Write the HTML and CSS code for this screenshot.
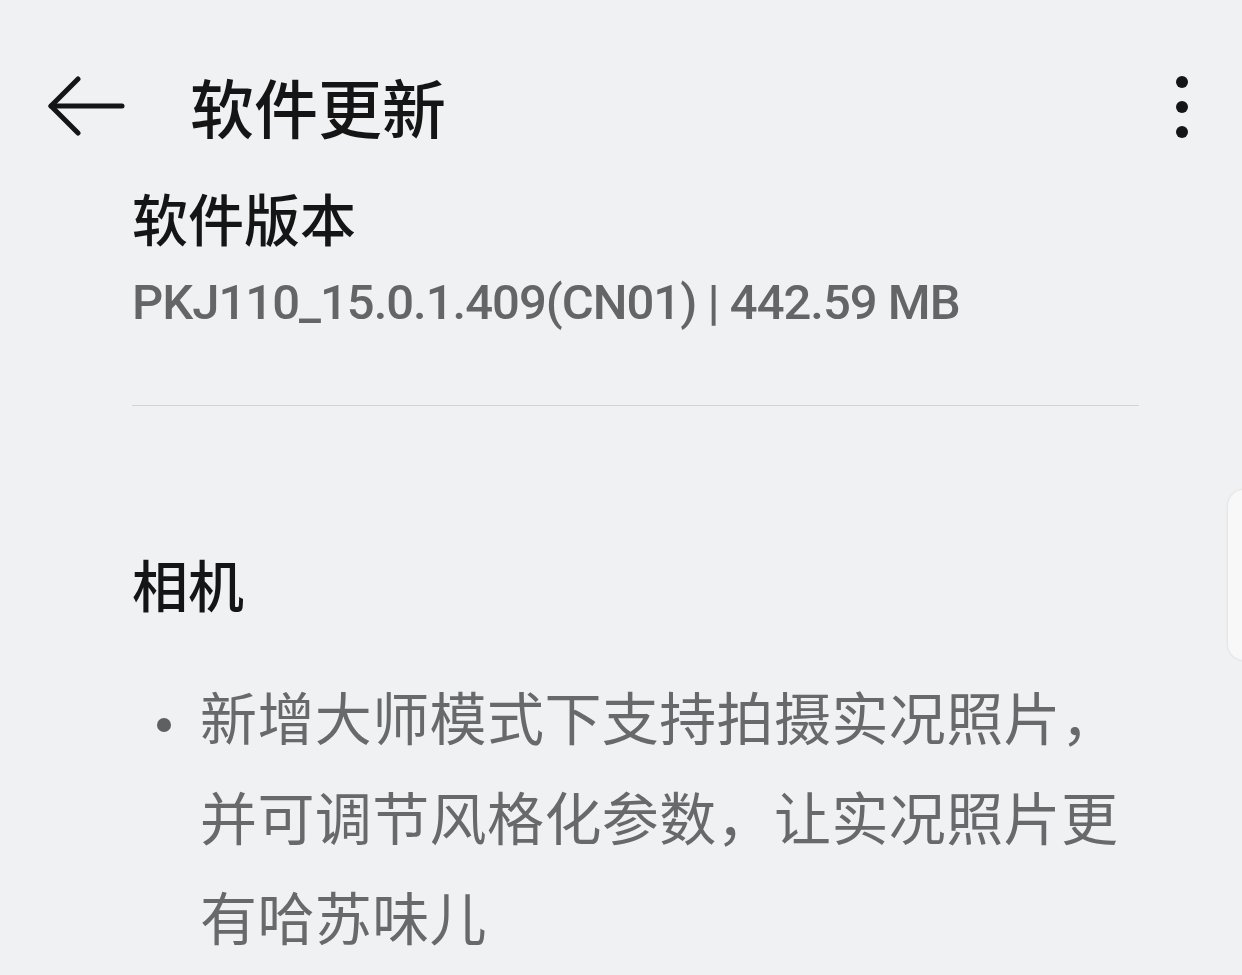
FILE: index.html
```html
<!DOCTYPE html>
<html lang="zh-CN">
<head>
  <meta charset="UTF-8" />
  <title>软件更新</title>
  <link rel="stylesheet" href="styles.css">
</head>
<body>
  <header class="topbar">
    <div class="back" aria-label="返回" role="button">
      <svg width="78" height="62" viewBox="0 0 78 62" fill="none" stroke="#151515" stroke-width="5" stroke-linecap="round" stroke-linejoin="round">
        <path d="M3 31 H74" />
        <path d="M30 4 L3 31 L30 58" />
      </svg>
    </div>
    <h1>软件更新</h1>
    <div class="more" aria-label="更多" role="button">
      <span></span><span></span><span></span>
    </div>
  </header>

  <main class="content">
    <section class="version">
      <h2>软件版本</h2>
      <p class="build">PKJ110_15.0.1.409(CN01) | 442.59 MB</p>
    </section>

    <hr class="divider" />

    <section class="notes">
      <h3>相机</h3>
      <ul class="note-list">
        <li>
          <span class="dot"></span>
          <span class="note-text">新增大师模式下支持拍摄实况照片，并可调节风格化参数，让实况照片更有哈苏味儿</span>
        </li>
      </ul>
    </section>
  </main>

  <div class="side-handle"></div>
</body>
</html>
```

FILE: styles.css
```css
* {
  box-sizing: border-box;
  margin: 0;
  padding: 0;
}
html, body {
  height: 100%;
}
body {
  font-family: Roboto, "Noto Sans CJK SC", sans-serif;
  background: #f0f1f3;
  color: #151515;
  overflow: hidden;
  position: relative;
}
/* Top bar */
.topbar {
  display: flex;
  align-items: center;
  height: 100px;
  margin-top: 55px;
  padding: 0 54px 0 48px;
}
.back {
  display: flex;
  align-items: center;
  width: 142px;
  margin-top: 2px;
}
.topbar h1 {
  flex: 1;
  font-family: "Noto Sans CJK SC", sans-serif;
  font-size: 64px;
  font-weight: 500;
  line-height: 100px;
}
.more {
  display: flex;
  flex-direction: column;
  gap: 13px;
  margin-top: 4px;
}
.more span {
  display: block;
  width: 12px;
  height: 12px;
  border-radius: 50%;
  background: #151515;
}
/* Content */
.content {
  padding: 0 103px 0 132px;
}
.version {
  margin-top: 27px;
}
.version h2 {
  font-family: "Noto Sans CJK SC", sans-serif;
  font-size: 56px;
  font-weight: 500;
  line-height: 70px;
}
.build {
  margin-top: 21px;
  font-size: 49px;
  font-weight: 500;
  line-height: 60px;
  letter-spacing: -1px;
  color: #646567;
  white-space: nowrap;
}
.divider {
  border: none;
  height: 1px;
  background: #d2d3d5;
  margin-top: 72px;
}
.notes {
  margin-top: 142px;
}
.notes h3 {
  font-family: "Noto Sans CJK SC", sans-serif;
  font-size: 56px;
  font-weight: 500;
  line-height: 70px;
}
.note-list {
  list-style: none;
  margin-top: 47px;
}
.note-list li {
  display: flex;
  align-items: flex-start;
}
.dot {
  flex: none;
  width: 14px;
  height: 14px;
  border-radius: 50%;
  background: #5f6062;
  margin: 53px 29px 0 25px;
}
.note-text {
  font-family: "Noto Sans CJK SC", sans-serif;
  font-size: 57px;
  font-weight: 400;
  line-height: 100px;
  letter-spacing: 0.4px;
  color: #68696b;
}
/* Floating side handle at the right edge */
.side-handle {
  position: absolute;
  top: 490px;
  right: -30px;
  width: 44px;
  height: 170px;
  border-radius: 16px;
  background: #f8f8f9;
  box-shadow: 0 0 3px rgba(0, 0, 0, 0.12);
}
```
